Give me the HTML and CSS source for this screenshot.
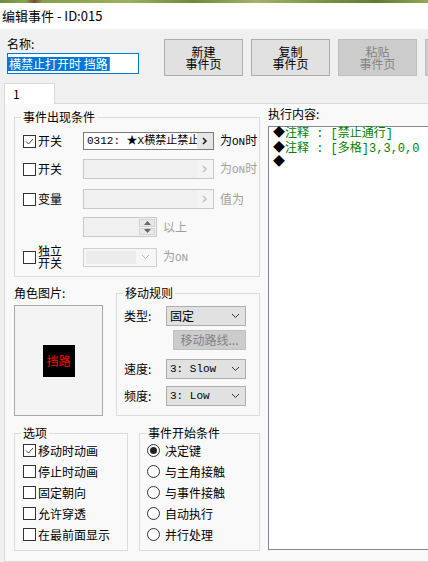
FILE: index.html
```html
<!DOCTYPE html>
<html lang="zh-CN">
<head>
  <meta charset="UTF-8">
  <meta name="viewport" content="width=device-width, initial-scale=1.0">
  <title>编辑事件 - ID:015</title>
  <link rel="stylesheet" href="styles.css">
</head>
<body>
  <div class="scenery"></div>
  <div class="titlebar">编辑事件 - ID:015</div>

  <div class="window">
    <div class="header">
      <div class="name-field">
        <div class="label">名称:</div>
        <div class="name-input"><span class="sel">横禁止打开时 挡路</span><span class="caret"></span></div>
      </div>
      <div class="page-buttons">
        <button class="btn">新建<br>事件页</button>
        <button class="btn">复制<br>事件页</button>
        <button class="btn" disabled>粘贴<br>事件页</button>
        <button class="btn" disabled>清除<br>事件页</button>
      </div>
    </div>

    <div class="tabs"><span class="tab">1</span></div>

    <div class="tab-panel">
      <div class="left-col">
        <!-- conditions -->
        <fieldset class="group">
          <legend>事件出现条件</legend>
          <div class="group-body cond-body">
            <div class="cond-row">
              <span class="check"><span class="box"><svg width="11" height="11" viewBox="0 0 11 11"><path d="M2 5.5l2.5 2.5 4.5-5" fill="none" stroke="#444" stroke-width="1"/></svg></span>开关</span>
              <span class="combo live">
                <span class="combo-text mono">0312: ★X横禁止禁止通行</span>
                <span class="combo-btn"><svg width="6" height="8" viewBox="0 0 6 8"><path d="M1 1l3 3-3 3" fill="none" stroke="#222" stroke-width="1.6"/></svg></span>
              </span>
              <span class="suffix">为<span class="mono">ON</span>时</span>
            </div>
            <div class="cond-row tall">
              <span class="check"><span class="box"></span>开关</span>
              <span class="combo off">
                <span class="combo-text"></span>
                <span class="combo-btn"><svg width="6" height="8" viewBox="0 0 6 8"><path d="M1 1l3 3-3 3" fill="none" stroke="#c4c4c4" stroke-width="1.6"/></svg></span>
              </span>
              <span class="suffix dim">为<span class="mono">ON</span>时</span>
            </div>
            <div class="cond-row tall gap10">
              <span class="check"><span class="box"></span>变量</span>
              <span class="combo off">
                <span class="combo-text"></span>
                <span class="combo-btn"><svg width="6" height="8" viewBox="0 0 6 8"><path d="M1 1l3 3-3 3" fill="none" stroke="#c4c4c4" stroke-width="1.6"/></svg></span>
              </span>
              <span class="suffix dim">值为</span>
            </div>
            <div class="cond-row tall">
              <span class="check"></span>
              <span class="spin">
                <span class="spin-field"></span>
                <span class="spin-btns">
                  <span class="spin-btn"><svg width="7" height="4" viewBox="0 0 7 4"><path d="M0 4h7L3.5 0z" fill="#666"/></svg></span>
                  <span class="spin-btn"><svg width="7" height="4" viewBox="0 0 7 4"><path d="M0 0h7L3.5 4z" fill="#666"/></svg></span>
                </span>
              </span>
              <span class="suffix dim">以上</span>
            </div>
            <div class="cond-row double">
              <span class="check"><span class="box"></span><span class="two-line">独立<br>开关</span></span>
              <span class="drop off">
                <span class="drop-field"></span>
                <svg width="9" height="6" viewBox="0 0 9 6"><path d="M1 1l3.5 3.5L8 1" fill="none" stroke="#b8b8b8"/></svg>
              </span>
              <span class="suffix dim">为<span class="mono">ON</span></span>
            </div>
          </div>
        </fieldset>

        <div class="middle">
          <div class="portrait">
            <div class="label">角色图片:</div>
            <div class="portrait-box"><span class="sprite">挡路</span></div>
          </div>

          <fieldset class="group move">
            <legend>移动规则</legend>
            <div class="group-body move-body">
              <div class="field-row">
                <span class="field-label">类型:</span>
                <span class="select">固定<svg width="9" height="6" viewBox="0 0 9 6"><path d="M1 1l3.5 3.5L8 1" fill="none" stroke="#333"/></svg></span>
              </div>
              <button class="btn route" disabled>移动路线...</button>
              <div class="field-row speed">
                <span class="field-label">速度:</span>
                <span class="select mono">3: Slow<svg width="9" height="6" viewBox="0 0 9 6"><path d="M1 1l3.5 3.5L8 1" fill="none" stroke="#333"/></svg></span>
              </div>
              <div class="field-row freq">
                <span class="field-label">频度:</span>
                <span class="select mono">3: Low<svg width="9" height="6" viewBox="0 0 9 6"><path d="M1 1l3.5 3.5L8 1" fill="none" stroke="#333"/></svg></span>
              </div>
            </div>
          </fieldset>
        </div>

        <div class="lower">
          <fieldset class="group options">
            <legend>选项</legend>
            <div class="group-body list-body">
              <div class="item"><span class="box"><svg width="11" height="11" viewBox="0 0 11 11"><path d="M2 5.5l2.5 2.5 4.5-5" fill="none" stroke="#444" stroke-width="1"/></svg></span>移动时动画</div>
              <div class="item"><span class="box"></span>停止时动画</div>
              <div class="item"><span class="box"></span>固定朝向</div>
              <div class="item"><span class="box"></span>允许穿透</div>
              <div class="item"><span class="box"></span>在最前面显示</div>
            </div>
          </fieldset>

          <fieldset class="group trigger">
            <legend>事件开始条件</legend>
            <div class="group-body list-body radios">
              <div class="item"><span class="radio on"></span>决定键</div>
              <div class="item"><span class="radio"></span>与主角接触</div>
              <div class="item"><span class="radio"></span>与事件接触</div>
              <div class="item"><span class="radio"></span>自动执行</div>
              <div class="item"><span class="radio"></span>并行处理</div>
            </div>
          </fieldset>
        </div>
      </div>

      <div class="right-col">
        <div class="label">执行内容:</div>
        <div class="commands">
          <div class="cmd"><span class="mark">◆</span><span class="note">注释 : [禁止通行]</span></div>
          <div class="cmd"><span class="mark">◆</span><span class="note">注释 : [多格]3,3,0,0</span></div>
          <div class="cmd"><span class="mark">◆</span></div>
        </div>
      </div>
    </div>
  </div>
</body>
</html>
```

FILE: styles.css
```css
body {
  margin: 0;
  width: 428px;
  height: 562px;
  overflow: hidden;
  background: #f0f0f0;
  font-family: "Noto Sans CJK SC", "Liberation Sans", sans-serif;
  font-size: 12px;
  line-height: 14px;
  color: #000;
}

.mono {
  font-family: "Liberation Mono", "Noto Sans CJK SC", monospace;
  font-size: 11px;
}

/* strip of the game map behind the dialog */
.scenery {
  height: 3px;
  background: linear-gradient(90deg, #6f8d3c 0%, #8aa34e 6%, #7a4a32 8%, #86a04a 10%, #9db15c 30%, #6d8a3a 45%, #a3b466 60%, #7b9344 75%, #5f7b33 88%, #93aa55 100%);
}

.titlebar {
  height: 26px;
  line-height: 26px;
  background: #fff;
  padding-left: 2px;
  font-size: 13px;
}

.window {
  padding-left: 4px;
}

.header {
  display: flex;
  padding: 8px 0 0 3px;
}

.name-field {
  width: 132px;
  flex: none;
}

.name-input {
  margin-top: 2px;
  height: 21px;
  box-sizing: border-box;
  border: 1px solid #0078d7;
  background: #fff;
  display: flex;
  align-items: center;
}

.sel {
  background: #0078d7;
  color: #fff;
  line-height: 14px;
  padding: 0 1px;
  white-space: nowrap;
}

.caret {
  width: 1px;
  height: 14px;
  background: #e07020;
}

.page-buttons {
  display: flex;
  gap: 8px;
  margin: 2px 0 0 25px;
}

.btn {
  font: inherit;
  font-size: 12px;
  line-height: 12px;
  color: #000;
  background: #e1e1e1;
  border: 1px solid #adadad;
  padding: 0;
  margin: 0;
  flex: none;
}

.page-buttons .btn {
  width: 79px;
  height: 37px;
}

.btn:disabled {
  background: #cccccc;
  border-color: #bfbfbf;
  color: #838383;
}

.tabs {
  margin-top: 7px;
  height: 20px;
}

.tab {
  display: inline-block;
  position: relative;
  z-index: 1;
  width: 51px;
  height: 21px;
  box-sizing: border-box;
  border: 1px solid #d9d9d9;
  border-bottom: none;
  background: #fff;
  padding-left: 8px;
  line-height: 19px;
}

.tab-panel {
  display: flex;
  gap: 8px;
  width: 600px;
  height: 457px;
  border: 1px solid #d9d9d9;
  background: #f9f9f9;
  padding-left: 9px;
}

.left-col {
  width: 246px;
  flex: none;
  padding-top: 6px;
}

/* group boxes */
.group {
  margin: 0;
  padding: 0;
  min-width: 0;
  border: 1px solid #dcdcdc;
}

.group legend {
  margin-left: 6px;
  padding: 0 2px;
  line-height: 14px;
}

.cond-body {
  padding: 7px 0 7px 8px;
}

.cond-row {
  display: flex;
  align-items: center;
  height: 20px;
}

.cond-row.tall {
  margin-top: 8px;
}

.cond-row.gap10 {
  margin-top: 10px;
}

.cond-row.double {
  height: 24px;
  margin-top: 8px;
}

.check {
  width: 60px;
  flex: none;
  display: flex;
  align-items: center;
  gap: 2px;
}

.two-line {
  line-height: 12px;
}

.box {
  width: 13px;
  height: 13px;
  box-sizing: border-box;
  border: 1px solid #333;
  background: #fff;
  display: inline-flex;
  align-items: center;
  justify-content: center;
  flex: none;
}

.combo {
  width: 131px;
  box-sizing: border-box;
  display: flex;
  flex: none;
}

.combo.live {
  height: 18px;
  border: 1px solid #7a7a7a;
  background: #fff;
}

.combo.off {
  height: 20px;
  border: 1px solid #c8c8c8;
  background: #f0f0f0;
}

.combo-text {
  flex: 1;
  overflow: hidden;
  white-space: nowrap;
  padding-left: 3px;
  line-height: 16px;
}

.combo-btn {
  width: 16px;
  flex: none;
  display: flex;
  align-items: center;
  justify-content: center;
}

.combo.live .combo-btn {
  background: #e6e6e6;
}

.combo.off .combo-btn {
  background: #f4f4f4;
}

.suffix {
  margin-left: 6px;
  white-space: nowrap;
}

.dim {
  color: #a0a0a0;
}

.spin {
  width: 74px;
  height: 20px;
  box-sizing: border-box;
  border: 1px solid #c8c8c8;
  background: #f0f0f0;
  display: flex;
  flex: none;
}

.spin-field {
  flex: 1;
}

.spin-btns {
  width: 16px;
  display: flex;
  flex-direction: column;
  gap: 1px;
  padding: 1px 1px 1px 0;
}

.spin-btn {
  flex: 1;
  background: #e8e8e8;
  border: 1px solid #d4d4d4;
  display: flex;
  align-items: center;
  justify-content: center;
}

.drop {
  width: 74px;
  height: 19px;
  box-sizing: border-box;
  border: 1px solid #d0d0d0;
  background: #f6f6f6;
  display: flex;
  align-items: center;
  flex: none;
  padding: 0 6px 0 2px;
  gap: 5px;
}

.drop-field {
  flex: 1;
  height: 13px;
  background: #ececec;
}

/* graphic + autonomous movement */
.middle {
  display: flex;
  margin-top: 9px;
}

.portrait {
  width: 89px;
  flex: none;
}

.portrait-box {
  margin-top: 5px;
  height: 111px;
  box-sizing: border-box;
  border: 1px solid #a8a8a8;
  background: #f4f4f4;
  display: flex;
  align-items: center;
  justify-content: center;
}

.sprite {
  width: 32px;
  height: 32px;
  background: #000;
  color: #ff0000;
  display: flex;
  align-items: center;
  justify-content: center;
}

.group.move {
  margin-left: 13px;
  width: 144px;
  box-sizing: border-box;
}

.move-body {
  padding: 6px 13px 8px 7px;
  display: flex;
  flex-direction: column;
}

.field-row {
  display: flex;
  align-items: center;
  height: 20px;
}

.field-row.speed {
  margin-top: 9px;
}

.field-row.freq {
  margin-top: 7px;
}

.field-label {
  width: 42px;
  flex: none;
}

.select {
  width: 80px;
  height: 20px;
  box-sizing: border-box;
  border: 1px solid #adadad;
  background: #e1e1e1;
  display: flex;
  align-items: center;
  justify-content: space-between;
  padding: 0 5px 0 3px;
}

.btn.route {
  width: 73px;
  height: 20px;
  margin: 4px 0 0 auto;
  line-height: 18px;
}

/* options + trigger */
.lower {
  display: flex;
  gap: 11px;
  margin-top: 10px;
}

.group.options {
  width: 114px;
  box-sizing: border-box;
}

.group.trigger {
  flex: 1;
}

.list-body {
  padding: 0 0 5px 8px;
}

.list-body.radios {
  padding-left: 7px;
}

.item {
  display: flex;
  align-items: center;
  gap: 2px;
  height: 21px;
  white-space: nowrap;
}

.radio {
  width: 13px;
  height: 13px;
  box-sizing: border-box;
  border: 1px solid #333;
  border-radius: 50%;
  background: #fff;
  display: inline-flex;
  align-items: center;
  justify-content: center;
  margin-right: 3px;
  flex: none;
}

.radio.on::after {
  content: "";
  width: 7px;
  height: 7px;
  border-radius: 50%;
  background: #222;
}

/* event command list */
.right-col {
  padding-top: 3px;
}

.commands {
  margin-top: 5px;
  width: 220px;
  height: 424px;
  box-sizing: border-box;
  border: 1px solid #828790;
  border-right: none;
  background: #fff;
  padding: 0 0 0 4px;
  font-family: "Liberation Mono", "Noto Sans CJK SC", monospace;
  font-size: 12px;
  line-height: 14.5px;
}

.cmd {
  white-space: nowrap;
}

.note {
  color: #008000;
}
```
